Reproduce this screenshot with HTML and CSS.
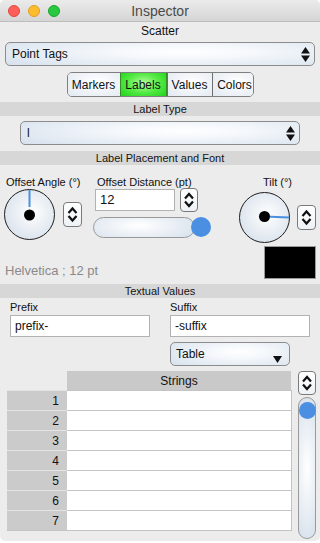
FILE: index.html
```html
<!DOCTYPE html>
<html lang="en">
<head>
    <meta charset="UTF-8">
    <meta name="viewport" content="width=device-width, initial-scale=1.0">
    <title>Inspector</title>
    <link rel="stylesheet" href="styles.css">
</head>
<body>

<div class="window">
    <!-- Title bar -->
    <div class="titlebar">
        <div class="lights">
            <span class="light red"></span>
            <span class="light yellow"></span>
            <span class="light green"></span>
        </div>
        <div class="title">Inspector</div>
    </div>

    <div class="group-title">Scatter</div>

    <div class="popup popup-wide">
        <span>Point Tags</span>
        <svg class="updown" width="9" height="15" viewBox="0 0 9 15"><polygon points="0,6.5 4.5,0 9,6.5"/><polygon points="0,8.5 4.5,15 9,8.5"/></svg>
    </div>

    <div class="segments">
        <div class="seg">Markers</div>
        <div class="seg active">Labels</div>
        <div class="seg">Values</div>
        <div class="seg">Colors</div>
    </div>

    <div class="section-head">Label Type</div>

    <div class="popup popup-mid">
        <span>l</span>
        <svg class="updown" width="9" height="15" viewBox="0 0 9 15"><polygon points="0,6.5 4.5,0 9,6.5"/><polygon points="0,8.5 4.5,15 9,8.5"/></svg>
    </div>

    <div class="section-head head-gap">Label Placement and Font</div>

    <!-- Placement controls -->
    <div class="placement">
        <div class="col col-angle">
            <div class="lbl">Offset Angle (°)</div>
            <div class="dial-row">
                <svg class="dial" width="51" height="51" viewBox="0 0 51 51">
                    <defs>
                        <radialGradient id="dialFill" cx="55%" cy="45%" r="60%">
                            <stop offset="0" stop-color="#ffffff"/>
                            <stop offset="1" stop-color="#d9e2ec"/>
                        </radialGradient>
                    </defs>
                    <circle cx="25.5" cy="25.5" r="25" fill="url(#dialFill)" stroke="#1e1e1e" stroke-width="1"/>
                    <line x1="25.5" y1="1" x2="25.5" y2="18" stroke="#4a8fe0" stroke-width="2"/>
                    <circle cx="25.5" cy="26" r="5.5" fill="#000"/>
                </svg>
                <div class="stepper">
                    <svg width="19" height="25" viewBox="0 0 19 25"><path d="M5.5 11 L9.5 6.5 L13.5 11" /><path d="M5.5 14 L9.5 18.5 L13.5 14" /></svg>
                </div>
            </div>
        </div>

        <div class="col col-dist">
            <div class="lbl">Offset Distance (pt)</div>
            <div class="field-row">
                <div class="field field-num">12</div>
                <div class="stepper stepper-sm">
                    <svg width="18" height="24" viewBox="0 0 18 24"><path d="M5 10.5 L9 6 L13 10.5" /><path d="M5 13.5 L9 18 L13 13.5" /></svg>
                </div>
            </div>
            <div class="slider">
                <div class="track"></div>
                <div class="knob"></div>
            </div>
        </div>

        <div class="col col-tilt">
            <div class="lbl lbl-center">Tilt (°)</div>
            <div class="dial-row tilt-row">
                <svg class="dial" width="51" height="51" viewBox="0 0 51 51">
                    <circle cx="25.5" cy="25.5" r="25" fill="url(#dialFill)" stroke="#1e1e1e" stroke-width="1"/>
                    <line x1="26" y1="24.5" x2="50" y2="25.5" stroke="#4a8fe0" stroke-width="2"/>
                    <circle cx="25.5" cy="24.5" r="5.5" fill="#000"/>
                </svg>
                <div class="stepper">
                    <svg width="19" height="25" viewBox="0 0 19 25"><path d="M5.5 11 L9.5 6.5 L13.5 11" /><path d="M5.5 14 L9.5 18.5 L13.5 14" /></svg>
                </div>
            </div>
        </div>
    </div>

    <div class="font-row">
        <span class="font-name">Helvetica ; 12 pt</span>
        <div class="swatch"></div>
    </div>

    <div class="section-head">Textual Values</div>

    <!-- Prefix / Suffix -->
    <div class="affixes">
        <div class="affix">
            <div class="lbl">Prefix</div>
            <div class="field field-wide">prefix-</div>
        </div>
        <div class="affix">
            <div class="lbl">Suffix</div>
            <div class="field field-wide">-suffix</div>
            <div class="popup popup-small">
                <span>Table</span>
                <svg width="9" height="7" viewBox="0 0 9 7"><polygon points="0,0 9,0 4.5,7"/></svg>
            </div>
        </div>
    </div>

    <!-- Strings table -->
    <div class="table-area">
        <table class="strings">
            <thead>
                <tr><th class="corner"></th><th class="col-head">Strings</th></tr>
            </thead>
            <tbody>
                <tr><td class="num">1</td><td class="cell"></td></tr>
                <tr><td class="num">2</td><td class="cell"></td></tr>
                <tr><td class="num">3</td><td class="cell"></td></tr>
                <tr><td class="num">4</td><td class="cell"></td></tr>
                <tr><td class="num">5</td><td class="cell"></td></tr>
                <tr><td class="num">6</td><td class="cell"></td></tr>
                <tr><td class="num">7</td><td class="cell"></td></tr>
            </tbody>
        </table>
        <div class="scroll-col">
            <div class="stepper stepper-sm">
                <svg width="18" height="24" viewBox="0 0 18 24"><path d="M5 10.5 L9 6 L13 10.5" /><path d="M5 13.5 L9 18 L13 13.5" /></svg>
            </div>
            <div class="vslider">
                <div class="vknob"></div>
            </div>
        </div>
    </div>
</div>

</body>
</html>
```

FILE: styles.css
```css
html {
    background-color: #ffffff;
}
body {
    margin: 0;
    padding: 0;
    font-family: 'Liberation Sans', Arial, sans-serif;
    color: #111;
}
.window {
    width: 320px;
    height: 541px;
    background-color: #ececec;
    border-radius: 5px;
    overflow: hidden;
}
.titlebar {
    height: 22px;
    background: linear-gradient(#ebebeb, #d5d5d5);
    border-bottom: 1px solid #bdbdbd;
    box-sizing: border-box;
    display: flex;
    align-items: center;
    position: relative;
}
.lights {
    display: flex;
    gap: 8px;
    padding-left: 8px;
}
.light {
    width: 12px;
    height: 12px;
    border-radius: 50%;
    box-sizing: border-box;
}
.red { background-color: #fc5f57; border: 1px solid #e2463f; }
.yellow { background-color: #fdbc2e; border: 1px solid #e09e1f; }
.green { background-color: #28c840; border: 1px solid #15a72b; }
.title {
    position: absolute;
    left: 0;
    right: 0;
    text-align: center;
    font-size: 14px;
    color: #4a4a4a;
    line-height: 22px;
}
.group-title {
    height: 18px;
    line-height: 18px;
    text-align: center;
    font-size: 12px;
}
.popup {
    height: 24px;
    box-sizing: border-box;
    border: 1px solid #8c8c8c;
    border-radius: 5px;
    background: radial-gradient(ellipse 70% 90% at 58% 40%, #ffffff 0%, #f4f7fb 35%, #d9e3ee 100%);
    display: flex;
    align-items: center;
    justify-content: space-between;
    padding: 0 4px 0 6px;
    font-size: 12px;
}
.popup-wide {
    margin: 2px 5px 0 5px;
}
.popup-mid {
    margin: 5px 20px 0 20px;
}
.updown polygon {
    fill: #111;
}
.segments {
    display: flex;
    width: 187px;
    margin: 6px auto 0 auto;
    height: 25px;
    box-sizing: border-box;
    border: 1px solid #7f7f7f;
    border-radius: 5px;
    overflow: hidden;
}
.seg {
    flex: none;
    display: flex;
    align-items: center;
    justify-content: center;
    font-size: 12px;
    background: radial-gradient(ellipse 80% 90% at 55% 40%, #ffffff 0%, #e0e8f1 100%);
    border-left: 1px solid #6f6f6f;
}
.seg:first-child { border-left: none; width: 52px; }
.seg:nth-child(2) { width: 45px; }
.seg:nth-child(3) { width: 44px; }
.seg:nth-child(4) { width: 44px; }
.seg.active {
    background: radial-gradient(ellipse 70% 80% at 50% 45%, #b4ff9c 0%, #4ee83e 55%, #1fd21f 100%);
    border-left: 1px solid #3a8a2a;
    border-right: 1px solid #3a8a2a;
}
.section-head {
    margin-top: 5px;
    height: 14px;
    line-height: 14px;
    background-color: #d7d7d7;
    text-align: center;
    font-size: 11px;
    color: #141414;
}
.head-gap {
    margin-top: 6px;
}
.placement {
    display: flex;
    align-items: flex-start;
    padding: 9px 4px 0 4px;
}
.lbl {
    font-size: 11px;
    line-height: 16px;
    height: 16px;
    white-space: nowrap;
}
.lbl-center {
    text-align: center;
}
.col-angle .lbl {
    padding-left: 2px;
}
.dial-row {
    display: flex;
    align-items: center;
    gap: 8px;
    margin-top: -1px;
}
.tilt-row {
    gap: 7px;
    margin-top: 2px;
}
.dial {
    display: block;
}
.stepper {
    width: 19px;
    height: 25px;
    box-sizing: border-box;
    border: 1px solid #7a7a7a;
    border-radius: 4px;
    background: linear-gradient(#ffffff, #eef2f6);
    display: flex;
    align-items: center;
    justify-content: center;
}
.stepper svg {
    display: block;
    margin: -1px;
}
.stepper path {
    fill: none;
    stroke: #111;
    stroke-width: 2.2;
}
.stepper-sm {
    width: 18px;
    height: 24px;
}
.col-dist {
    margin-left: 11px;
    width: 118px;
}
.col-dist .lbl {
    padding-left: 4px;
}
.field-row {
    display: flex;
    align-items: center;
    gap: 5px;
    margin-top: -2px;
    margin-left: 2px;
}
.field {
    height: 22px;
    box-sizing: border-box;
    background-color: #ffffff;
    border: 1px solid #b2b2b2;
    font-size: 12px;
    line-height: 20px;
    padding-left: 4px;
}
.field-num {
    width: 80px;
    font-size: 13px;
}
.slider {
    position: relative;
    margin-top: 5px;
    height: 21px;
}
.track {
    width: 102px;
    height: 21px;
    box-sizing: border-box;
    border: 1px solid #999;
    border-radius: 11px;
    background: radial-gradient(ellipse 60% 90% at 45% 40%, #ffffff 0%, #dbe4ee 100%);
}
.knob {
    position: absolute;
    left: 98px;
    top: 0;
    width: 20px;
    height: 20px;
    border-radius: 50%;
    background-color: #4a8fe2;
}
.col-tilt {
    margin-left: auto;
}
.font-row {
    display: flex;
    align-items: flex-end;
    justify-content: space-between;
    padding: 0 4px 0 5px;
    margin-top: 3px;
}
.font-name {
    font-size: 13px;
    line-height: 16px;
    color: #8a8a8a;
}
.swatch {
    width: 52px;
    height: 33px;
    box-sizing: border-box;
    background-color: #000;
    border: 1px solid #9a9a9a;
}
.affixes {
    display: flex;
    padding: 2px 10px 0 10px;
    gap: 20px;
}
.affix {
    width: 140px;
}
.affix .lbl {
    height: 15px;
    line-height: 15px;
}
.field-wide {
    width: 140px;
}
.popup-small {
    width: 120px;
    margin-top: 5px;
    padding: 0 7px 0 5px;
}
.popup-small svg {
    margin-top: 10px;
}
.popup-small polygon {
    fill: #111;
}
.table-area {
    display: flex;
    align-items: flex-start;
    padding-left: 7px;
    margin-top: 5px;
    gap: 6px;
}
.strings {
    border-collapse: collapse;
    font-size: 12px;
}
.strings th {
    padding: 0;
    height: 19px;
    font-weight: normal;
}
.corner {
    width: 60px;
    background: transparent;
}
.col-head {
    width: 224px;
    background-color: #c9c9c9;
    text-align: center;
}
.strings td {
    height: 19px;
    padding: 0;
}
.num {
    background-color: #cbcbcb;
    text-align: right;
    padding-right: 8px !important;
    border-top: 1px solid #e4e4e4;
    box-sizing: border-box;
}
.cell {
    background-color: #ffffff;
    border-top: 1px solid #c4c4c4;
    border-right: 1px solid #c4c4c4;
}
.strings tbody tr:last-child td {
    border-bottom: 1px solid #c4c4c4;
}
.scroll-col {
    display: flex;
    flex-direction: column;
    gap: 2px;
}
.vslider {
    position: relative;
    width: 18px;
    height: 142px;
    box-sizing: border-box;
    border: 1px solid #9a9a9a;
    border-radius: 9px;
    background: radial-gradient(ellipse 90% 50% at 50% 50%, #ffffff 0%, #dbe4ee 100%);
}
.vknob {
    position: absolute;
    left: 0;
    top: 4px;
    width: 17px;
    height: 17px;
    border-radius: 50%;
    background-color: #4a8fe2;
}
```
